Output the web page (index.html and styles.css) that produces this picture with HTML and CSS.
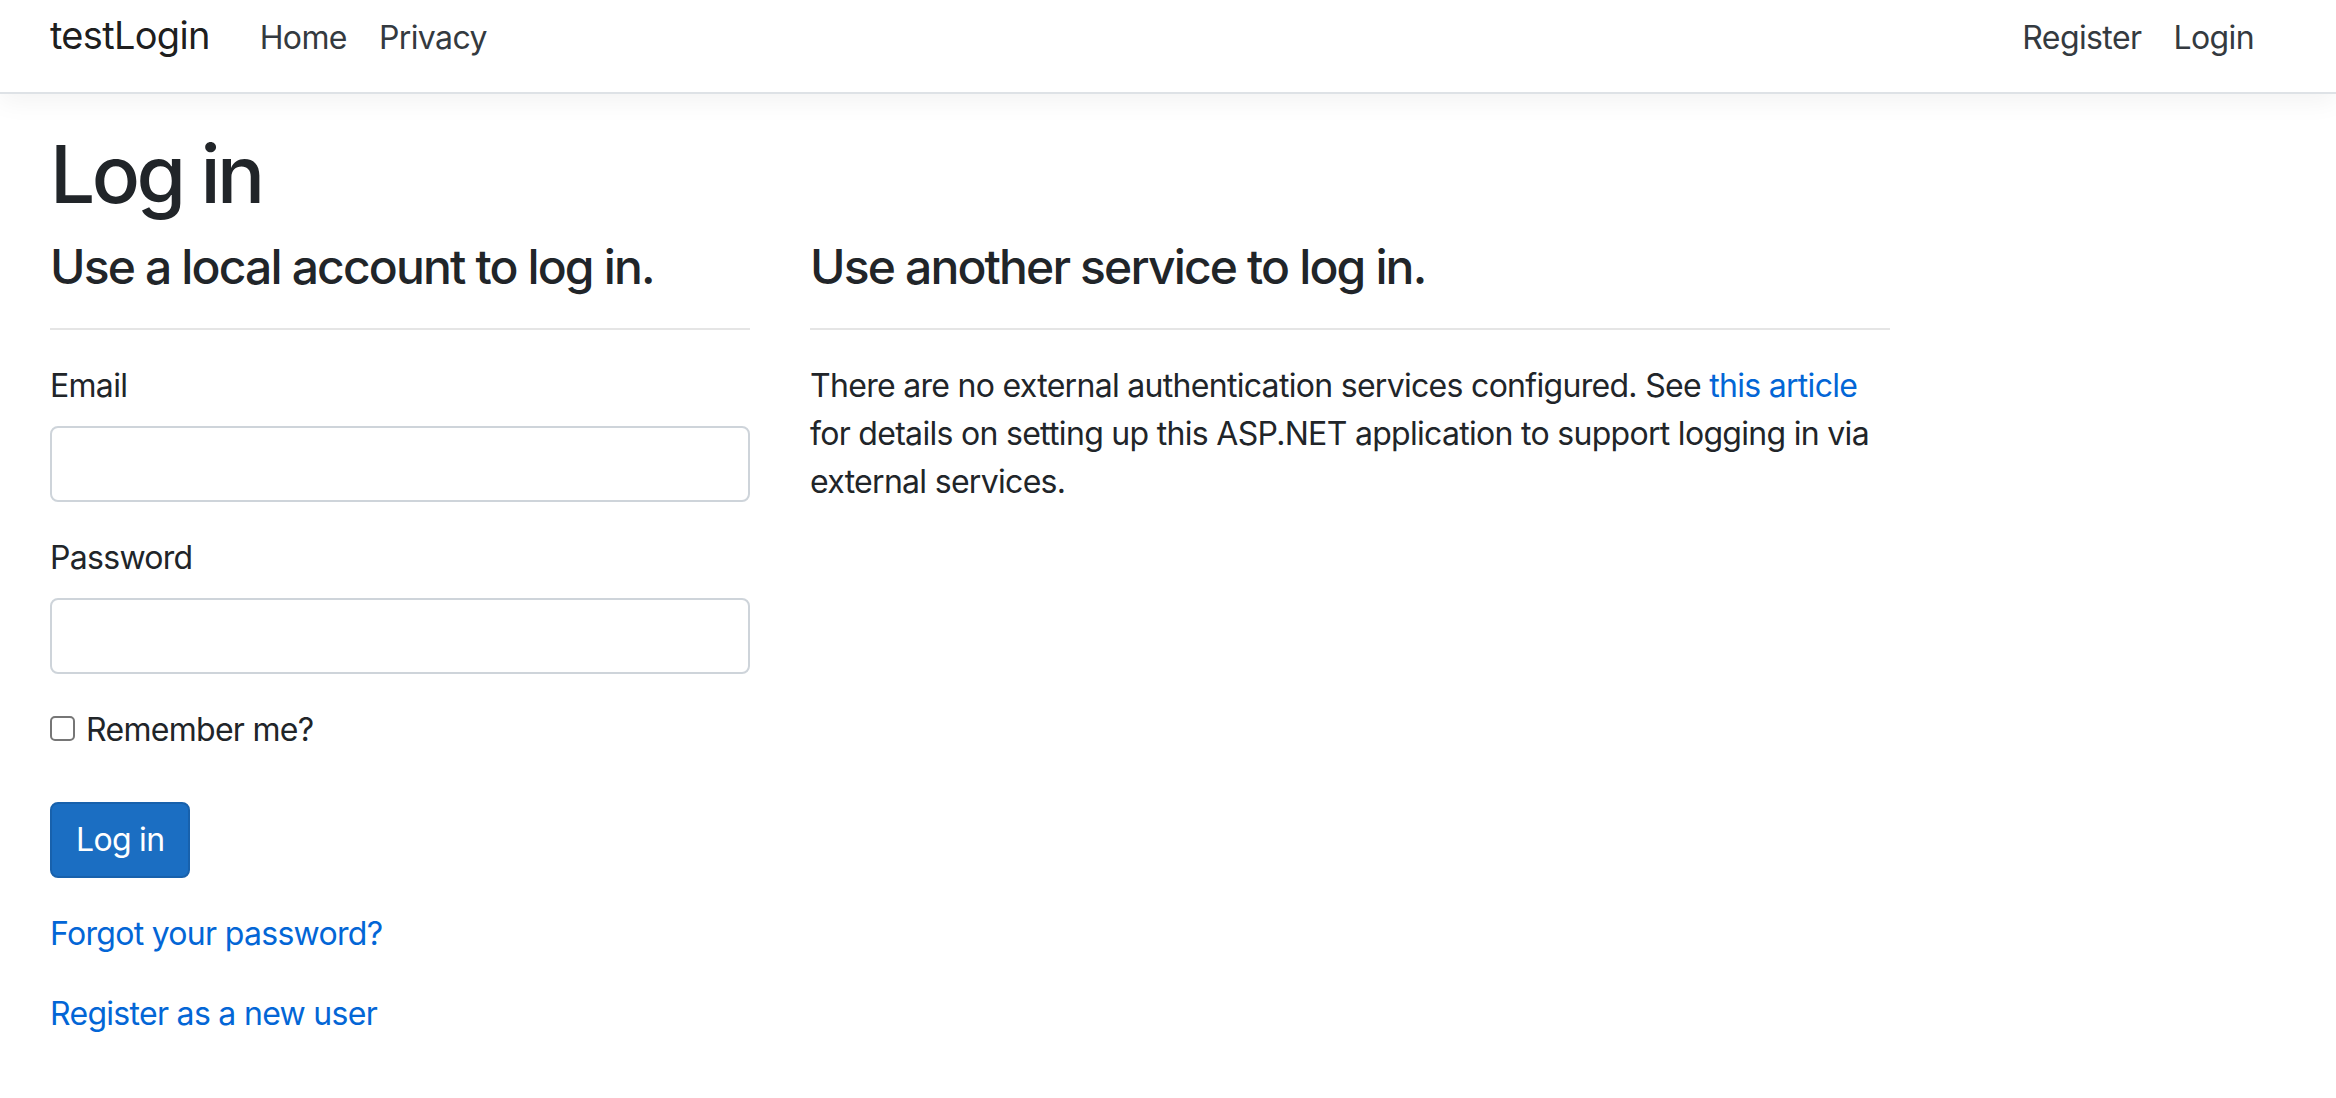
FILE: index.html
```html
<!DOCTYPE html>
<html lang="en">
<head>
<meta charset="utf-8">
<title>Log in - testLogin</title>
<link rel="stylesheet" href="styles.css">
</head>
<body>
<header>
  <nav class="navbar">
    <div class="navbar-inner">
      <a class="brand" href="#">testLogin</a>
      <ul class="nav nav-left">
        <li><a class="nav-link" href="#">Home</a></li>
        <li><a class="nav-link" href="#">Privacy</a></li>
      </ul>
      <ul class="nav nav-right">
        <li><a class="nav-link" href="#">Register</a></li>
        <li><a class="nav-link" href="#">Login</a></li>
      </ul>
    </div>
  </nav>
</header>
<main class="container">
  <h1 class="page-title">Log in</h1>
  <div class="row">
    <div class="col col-4">
      <section>
        <form class="login-form">
          <h4 class="section-title">Use a local account to log in.</h4>
          <hr class="divider">
          <div class="form-group">
            <label class="field-label" for="email">Email</label>
            <input class="form-control" id="email" type="email">
          </div>
          <div class="form-group">
            <label class="field-label" for="password">Password</label>
            <input class="form-control" id="password" type="password">
          </div>
          <div class="form-group">
            <div class="checkbox">
              <label class="check-label"><input class="check" type="checkbox">Remember me?</label>
            </div>
          </div>
          <div class="form-group">
            <button type="submit" class="btn-primary">Log in</button>
          </div>
          <div class="form-group">
            <p class="para"><a class="link" href="#">Forgot your password?</a></p>
            <p class="para"><a class="link" href="#">Register as a new user</a></p>
          </div>
        </form>
      </section>
    </div>
    <div class="col col-6">
      <section>
        <h4 class="section-title">Use another service to log in.</h4>
        <hr class="divider">
        <p class="para">There are no external authentication services configured. See <a class="link" href="#">this article</a> for details on setting up this ASP.NET application to support logging in via external services.</p>
      </section>
    </div>
  </div>
</main>
</body>
</html>
```
FILE: styles.css
```css
html, body {
  margin: 0;
  padding: 0;
  background: #fff;
}
body {
  font-family: Inter, "Noto Sans", "Liberation Sans", sans-serif;
  font-size: 32px;
  line-height: 48px;
  letter-spacing: -0.7px;
  color: #212529;
}
* { box-sizing: border-box; }

.navbar {
  height: 94px;
  background: #fff;
  border-bottom: 2px solid #dee2e6;
  box-shadow: 0 8px 24px rgba(0, 0, 0, 0.05);
  margin-bottom: 32px;
}
.navbar-inner {
  width: 2220px;
  margin-left: 50px;
  display: flex;
  align-items: baseline;
  padding-top: 7px;
}
.brand {
  font-size: 38px;
  line-height: 57px;
  letter-spacing: -0.7px;
  color: rgba(0, 0, 0, 0.9);
  text-decoration: none;
  margin-right: 34px;
}
.nav {
  list-style: none;
  margin: 0;
  padding: 0;
  display: flex;
  align-items: baseline;
}
.nav-right {
  margin-left: auto;
}
.nav-link {
  display: block;
  padding: 0 16px;
  color: #343a40;
  text-decoration: none;
  font-size: 32px;
  line-height: 48px;
  letter-spacing: -0.6px;
}

.container {
  width: 2280px;
  margin-left: 20px;
  padding: 0 30px;
}
.page-title {
  font-size: 80px;
  line-height: 96px;
  font-weight: 500;
  letter-spacing: -3.5px;
  margin: 0 0 16px;
}
.row {
  display: flex;
  margin: 0 -30px;
}
.col {
  padding: 0 30px;
}
.col-4 { width: 760px; }
.col-6 { width: 1140px; }

.login-form { margin: 0; }
.section-title {
  font-size: 48px;
  line-height: 57.6px;
  font-weight: 500;
  letter-spacing: -1.85px;
  margin: 0 0 16px;
}
.divider {
  border: 0;
  border-top: 2px solid rgba(0, 0, 0, 0.1);
  margin: 32px 0;
  height: 0;
}
.form-group {
  margin-bottom: 32px;
}
.field-label {
  display: inline-block;
  margin-bottom: 16px;
}
.form-control {
  display: block;
  width: 100%;
  height: 76px;
  padding: 12px 24px;
  font: inherit;
  color: #495057;
  background: #fff;
  border: 2px solid #ced4da;
  border-radius: 8px;
  margin: 0;
}
.check-label {
  display: inline-flex;
  align-items: center;
  margin-bottom: 16px;
}
.check {
  appearance: none;
  -webkit-appearance: none;
  width: 25px;
  height: 25px;
  margin: 0 11px 0 0;
  border: 2px solid #767676;
  border-radius: 5px;
  background: #fff;
  position: relative;
  top: -1px;
}
.btn-primary {
  display: inline-block;
  font: inherit;
  font-weight: 400;
  letter-spacing: -0.7px;
  color: #fff;
  background: #1b6ec2;
  border: 2px solid #1861ac;
  border-radius: 8px;
  padding: 12px 24px;
  height: 76px;
  line-height: 48px;
  cursor: pointer;
}
.para {
  margin: 0 0 32px;
}
.link {
  color: #0366d6;
  text-decoration: none;
}
```
